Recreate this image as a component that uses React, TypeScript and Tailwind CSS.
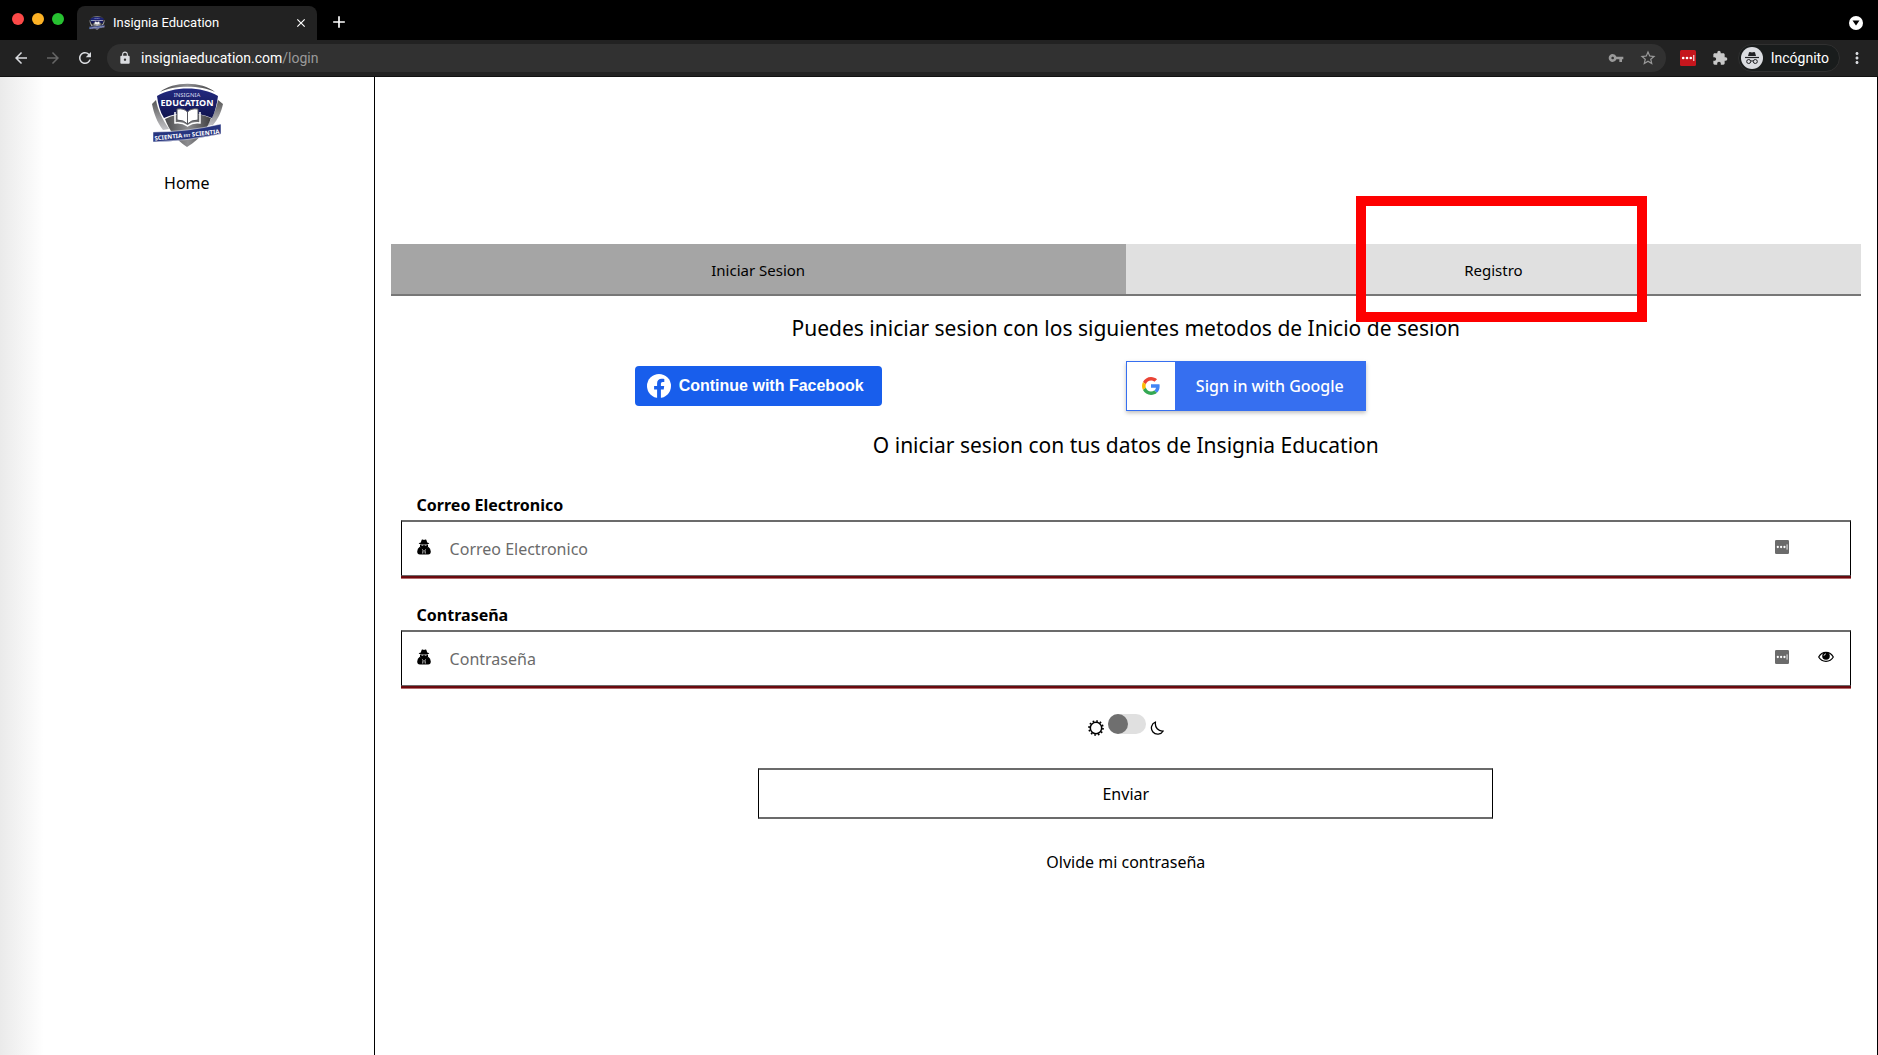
import React, { useState } from 'react';
import {
  MdArrowBack,
  MdArrowForward,
  MdClose,
  MdExtension,
  MdLock,
  MdMoreVert,
  MdAdd,
  MdRefresh,
  MdStarBorder,
  MdVpnKey,
} from 'react-icons/md';

const Logo: React.FC<{ className?: string }> = ({ className }) => (
  <svg viewBox="0 0 72 66" className={className} role="img" aria-label="Insignia Education">
    <defs>
      <linearGradient id="steel" x1="0" x2="1">
        <stop offset="0" stopColor="#4a4a4c" />
        <stop offset="0.5" stopColor="#8d8d90" />
        <stop offset="1" stopColor="#3e3e40" />
      </linearGradient>
      <linearGradient id="wing" x1="0" x2="0" y1="0" y2="1">
        <stop offset="0" stopColor="#555" />
        <stop offset="1" stopColor="#c4c4c8" />
      </linearGradient>
      <linearGradient id="navy" x1="0" x2="0" y1="0" y2="1">
        <stop offset="0" stopColor="#232a80" />
        <stop offset="1" stopColor="#10144f" />
      </linearGradient>
    </defs>
    <path d="M9 10C22-1 51-1 64 10C50 3 23 3 9 10Z" fill="url(#steel)" />
    <path d="M1 22L5 18C7 29 12 38 18 47L12 48C6 40 3 32 1 22Z" fill="url(#wing)" />
    <path d="M72 22L67 18C65 29 61 36 56 44L62 43C67 37 70 31 72 22Z" fill="url(#wing)" />
    <path d="M14 37Q36 26 60 36C57 45 50 57 36 65C25 58 18 48 14 37Z" fill="url(#steel)" />
    <path d="M6 14C22 4 51 4 67 14C66 22 64 30 61 36Q36 26 13 36C9 30 7 22 6 14Z" fill="url(#navy)" />
    <text x="36" y="15" textAnchor="middle" fontSize="6" fill="#d5d8ee" fontFamily="Noto Sans, sans-serif">
      INSIGNIA
    </text>
    <text x="36" y="24" textAnchor="middle" fontSize="9" fontWeight="700" fill="#fff" fontFamily="Noto Sans, sans-serif">
      EDUCATION
    </text>
    <path
      d="M26 27Q33 26 36.500 30Q40 26 47 27V38Q40 38 36.500 42Q33 38 26 38Z"
      fill="#fff"
      stroke="#55565c"
      strokeWidth="1"
    />
    <path d="M24 30V41Q31 40 36.500 44Q42 40 49 41V30" fill="none" stroke="#fff" strokeWidth="1.500" />
    <path d="M36.500 30V42" stroke="#55565c" strokeWidth="1" />
    <path d="M2 50Q36 50 70 42V52Q36 59 2 60Z" fill="#27357f" stroke="#fff" strokeWidth="0.500" />
    <text
      transform="rotate(-6 36 53)"
      x="36"
      y="55"
      textAnchor="middle"
      fontSize="6"
      fontWeight="700"
      fill="#fff"
      fontFamily="Noto Sans, sans-serif"
    >
      SCIENTIA <tspan fontSize="4">EST</tspan> SCIENTIA
    </text>
  </svg>
);

const IncognitoIcon = () => (
  <svg viewBox="0 0 22 22" className="size-[22px]" aria-hidden="true">
    <circle cx="11" cy="11" r="11" fill="#dadce0" />
    <path d="M7 9L8 5.500Q8.300 4.800 9 5L11 5.500L13 5Q13.700 4.800 14 5.500L15 9Z" fill="#202124" />
    <path d="M4 10.500H18" stroke="#202124" strokeWidth="1.200" />
    <g fill="none" stroke="#202124" strokeWidth="1">
      <circle cx="7.700" cy="14.500" r="2" />
      <circle cx="14.300" cy="14.500" r="2" />
      <path d="M9.700 14.200Q11 13.400 12.300 14.200" />
    </g>
  </svg>
);

const PasswordManagerIcon: React.FC<{ className: string }> = ({ className }) => (
  <svg viewBox="0 0 16 16" className={className} aria-hidden="true">
    <rect width="16" height="16" rx="1.500" fill="currentColor" />
    <circle cx="3.200" cy="8" r="1.300" fill="#fff" />
    <circle cx="7" cy="8" r="1.300" fill="#fff" />
    <circle cx="10.800" cy="8" r="1.300" fill="#fff" />
    <path d="M13.800 5V11" stroke="#fff" strokeWidth="1" />
  </svg>
);

const SpyIcon = () => (
  <svg viewBox="0 0 14 16" className="mb-1 h-4 w-3.5" aria-hidden="true">
    <path d="M3.800 3.500L4.700 0.800Q5 0.200 5.700 0.500L7 1L8.300 0.500Q9 0.200 9.300 0.800L10.200 3.500Q12.300 3.900 12.300 4.400Q12.300 5.200 7 5.200Q1.700 5.200 1.700 4.400Q1.700 3.900 3.800 3.500Z" />
    <path d="M3 5.500H11V7.500Q10.600 9.300 9.200 10H4.800Q3.400 9.300 3 7.500Z" />
    <path d="M2.800 7.800Q0.300 9.300 0.200 12.500Q0.200 15.500 2.800 15.500H11.200Q13.800 15.500 13.800 12.500Q13.700 9.300 11.200 7.800L8.500 9.800H5.500Z" />
    <path d="M4.500 6.300H6.300M7.700 6.300H9.500" stroke="#fff" strokeWidth="0.700" />
    <path d="M5.300 10.500L6.100 11.200L5.700 14.500M8.700 10.500L7.900 11.200L8.300 14.500" fill="none" stroke="#fff" strokeWidth="0.800" />
  </svg>
);

const EyeIcon = () => (
  <svg viewBox="0 0 16 12" className="h-3 w-4" aria-hidden="true">
    <path d="M0.700 6C4-0.200 12-0.200 15.300 6C12 11.800 4 11.800 0.700 6Z" fill="none" stroke="#000" strokeWidth="1.200" />
    <circle cx="8" cy="5" r="3.800" fill="#000" />
    <path d="M6 4.800Q6.200 3 8 2.800" fill="none" stroke="#fff" strokeWidth="0.800" />
  </svg>
);

const SunIcon = () => (
  <svg viewBox="0 0 16 16" className="size-4" aria-hidden="true">
    <circle cx="8" cy="8" r="5.700" fill="none" stroke="#000" strokeWidth="1.500" />
    <circle cx="8" cy="8" r="7" fill="none" stroke="#000" strokeWidth="1.700" strokeDasharray="1.700 1.965" />
  </svg>
);

const MoonIcon = () => (
  <svg viewBox="0 0 14 16" className="h-4 w-3.5" aria-hidden="true">
    <path
      d="M5.500 2A6.300 6.300 0 1 0 13.200 11C8.500 11.600 4.500 7.500 5.500 2Z"
      fill="none"
      stroke="#000"
      strokeWidth="1.300"
      strokeLinejoin="round"
    />
  </svg>
);

const GoogleIcon = () => (
  <svg viewBox="0 0 18 18" className="size-[18px]" aria-hidden="true">
    <path fill="#ea4335" d="M9 3.480c1.690 0 2.830.730 3.480 1.340l2.540-2.480C13.460.890 11.430 0 9 0 5.480 0 2.440 2.020.960 4.960l2.910 2.260C4.600 5.050 6.620 3.480 9 3.480z" />
    <path fill="#4285f4" d="M17.640 9.200c0-.740-.060-1.280-.190-1.840H9v3.340h4.960c-.100.830-.640 2.080-1.840 2.920l2.840 2.200c1.700-1.570 2.680-3.880 2.680-6.620z" />
    <path fill="#fbbc05" d="M3.880 10.780A5.540 5.540 0 0 1 3.580 9c0-.620.110-1.220.290-1.780L.960 4.960A9.010 9.010 0 0 0 0 9c0 1.450.350 2.820.960 4.040l2.920-2.260z" />
    <path fill="#34a853" d="M9 18c2.430 0 4.470-.800 5.960-2.180l-2.840-2.200c-.760.530-1.780.900-3.120.900-2.380 0-4.400-1.570-5.120-3.740L.970 13.040C2.450 15.980 5.480 18 9 18z" />
  </svg>
);

const BrowserBar = () => (
  <header className="bg-black font-[Roboto,sans-serif] text-white">
    <div className="flex h-10 items-end">
      <div className="mb-[15px] flex gap-2 pl-3">
        <span className="size-3 rounded-full bg-[#fc4948]" />
        <span className="size-3 rounded-full bg-[#fdb225]" />
        <span className="size-3 rounded-full bg-[#27c131]" />
      </div>
      <div className="ml-[13px] flex h-[34px] w-60 items-center rounded-t-lg bg-[#222] pr-[9px] pl-3">
        <Logo className="size-4" />
        <span className="ml-2 flex-1 text-[13px]">Insignia Education</span>
        <button type="button" aria-label="Cerrar pestaña">
          <MdClose className="size-3.5" />
        </button>
      </div>
      <button type="button" aria-label="Nueva pestaña" className="mb-2 ml-3">
        <MdAdd className="size-5" />
      </button>
      <button
        type="button"
        aria-label="Buscar pestañas"
        className="mr-[15px] mb-2.5 ml-auto flex size-3.5 items-center justify-center rounded-full bg-white"
      >
        <svg viewBox="0 0 8 6" className="h-1.5 w-2" aria-hidden="true">
          <path d="M0.500 0.500H7.500L4 5.500Z" fill="#000" />
        </svg>
      </button>
    </div>
    <div className="flex h-[37px] items-center border-b border-[#111] bg-[#222] pr-3 pl-3">
      <div className="flex w-[95px] gap-3.5 text-[#dadce0]">
        <button type="button" aria-label="Atrás">
          <MdArrowBack className="size-[18px]" />
        </button>
        <button type="button" aria-label="Adelante" className="text-[#666]">
          <MdArrowForward className="size-[18px]" />
        </button>
        <button type="button" aria-label="Recargar">
          <MdRefresh className="size-[18px]" />
        </button>
      </div>
      <div className="flex h-7 flex-1 items-center rounded-full bg-[#313131] pr-[9px] pl-[11px]">
        <MdLock className="size-3.5 text-[#dadce0]" />
        <span className="ml-[9px] flex-1 text-[14px]">
          insigniaeducation.com<span className="text-[#9a9a9a]">/login</span>
        </span>
        <MdVpnKey className="mr-[15px] size-4 text-[#9a9a9a]" />
        <MdStarBorder className="size-[18px] text-[#9a9a9a]" />
      </div>
      <PasswordManagerIcon className="ml-3.5 size-4 text-[#c5161d]" />
      <MdExtension className="ml-4 size-4 text-[#c8c8c8]" />
      <div className="ml-2.5 flex h-7 items-center gap-2 rounded-full border border-[#303030] bg-[#191c1c] pr-2.5 pl-0.5">
        <IncognitoIcon />
        <span className="text-[14px]">Incógnito</span>
      </div>
      <button type="button" aria-label="Menú" className="ml-2">
        <MdMoreVert className="size-[18px] text-[#dadce0]" />
      </button>
    </div>
  </header>
);

interface FieldProps {
  id: string;
  label: string;
  type: string;
  children?: React.ReactNode;
}

const Field: React.FC<FieldProps> = ({ id, label, type, children }) => (
  <div className="px-2.5">
    <label htmlFor={id} className="block pl-4 text-base leading-[30px] font-bold">
      {label}
    </label>
    <div className="border-b border-[#b56b6d]">
      <div className="border-b-2 border-[#6a0a0e]">
        <div className="flex h-14 items-center border-x border-t-2 border-b border-x-black border-y-[#6b6b6b] pl-[15px]">
          <SpyIcon />
          <input
            id={id}
            type={type}
            placeholder={label}
            className="ml-[19px] h-full min-w-0 flex-1 text-base outline-none placeholder:text-[#6b6b6b]"
          />
          <PasswordManagerIcon className="mb-1 size-3.5 text-[#6b6b6b]" />
          <div className="mb-1 flex w-[61px] justify-end pr-4">{children}</div>
        </div>
      </div>
    </div>
  </div>
);

const LoginForm = () => {
  const [dark, setDark] = useState(false);
  const [showPassword, setShowPassword] = useState(false);

  return (
    <form onSubmit={(e) => e.preventDefault()}>
      <h2 className="pt-[17px] text-center text-[21px] leading-[30px]">
        Puedes iniciar sesion con los siguientes metodos de Inicio de sesion
      </h2>
      <div className="mt-[18px] grid grid-cols-2 items-center">
        <button
          type="button"
          className="flex h-10 w-[247px] items-center gap-2 justify-self-center rounded bg-[#185eec] pl-3 font-['Liberation_Sans',Arial,sans-serif] text-base font-bold text-white"
        >
          <svg viewBox="0 0 24 24" className="size-6" aria-hidden="true">
            <circle cx="12" cy="12" r="12" fill="#fff" />
            <path
              d="M16.700 15.500L17.200 12H13.900V9.800C13.900 8.800 14.400 7.900 15.800 7.900H17.300V4.900S15.900 4.700 14.600 4.700C11.900 4.700 10.100 6.300 10.100 9.300V12H7.100V15.500H10.100V24H13.900V15.500Z"
              fill="#185eec"
            />
          </svg>
          <span className="whitespace-nowrap">Continue with Facebook</span>
        </button>
        <button
          type="button"
          className="flex h-[50px] w-60 items-center border border-[#366ff0] bg-[#366ff0] text-base font-medium text-white shadow-[0_2px_4px_rgba(0,0,0,0.25)]"
        >
          <span className="flex h-full w-12 items-center justify-center bg-white">
            <GoogleIcon />
          </span>
          <span className="flex-1 whitespace-nowrap">Sign in with Google</span>
        </button>
      </div>
      <h2 className="mt-[19px] text-center text-[21px] leading-[30px]">
        O iniciar sesion con tus datos de Insignia Education
      </h2>

      <div className="mt-[30px] flex flex-col gap-[21px]">
        <Field id="email" label="Correo Electronico" type="email" />
        <Field id="password" label="Contraseña" type={showPassword ? 'text' : 'password'}>
          <button type="button" aria-label="Mostrar contraseña" onClick={() => setShowPassword(!showPassword)}>
            <EyeIcon />
          </button>
        </Field>
      </div>

      <label className="mt-[25px] flex items-end justify-center gap-1">
        <SunIcon />
        <input
          type="checkbox"
          aria-label="Modo oscuro"
          checked={dark}
          onChange={(e) => setDark(e.target.checked)}
          className="mb-0.5 h-5 w-[38px] appearance-none rounded-full bg-[#e0e0e0] before:block before:size-5 before:rounded-full before:bg-[#6f6f6f] checked:before:ml-[18px]"
        />
        <MoonIcon />
      </label>

      <button
        type="submit"
        className="mx-auto mt-8 block h-[51px] w-1/2 border-x border-y-2 border-x-black border-y-[#6b6b6b] text-base"
      >
        Enviar
      </button>
      <a href="#olvide" className="mx-auto mt-[31px] block w-fit text-base">
        Olvide mi contraseña
      </a>
    </form>
  );
};

export default function App() {
  return (
    <div className="flex min-h-screen flex-col bg-white font-['Noto_Sans',sans-serif] text-black">
      <BrowserBar />
      <div className="flex flex-1">
        <aside className="flex w-[calc(20%-2px)] flex-col items-center bg-linear-to-r from-[#eaeaea] to-white to-[44px] pt-[5px]">
          <Logo className="h-[66px] w-[72px]" />
          <a href="#home" className="mt-[23px] text-base">
            Home
          </a>
        </aside>
        <main className="flex-1 border-x border-black px-4 pt-[167px]">
          <div role="tablist" className="grid grid-cols-2 border-b-2 border-[#777]">
            <button type="button" role="tab" aria-selected="true" className="h-[50px] bg-[#a5a5a5] pt-0.5 text-[15px]">
              Iniciar Sesion
            </button>
            <div className="relative">
              <button type="button" role="tab" aria-selected="false" className="h-[50px] w-full bg-[#e0e0e0] pt-0.5 text-[15px]">
                Registro
              </button>
              <div className="pointer-events-none absolute -top-12 left-[230px] z-10 h-[126px] w-[291px] border-10 border-[#fe0000]" />
            </div>
          </div>
          <LoginForm />
        </main>
      </div>
    </div>
  );
}
